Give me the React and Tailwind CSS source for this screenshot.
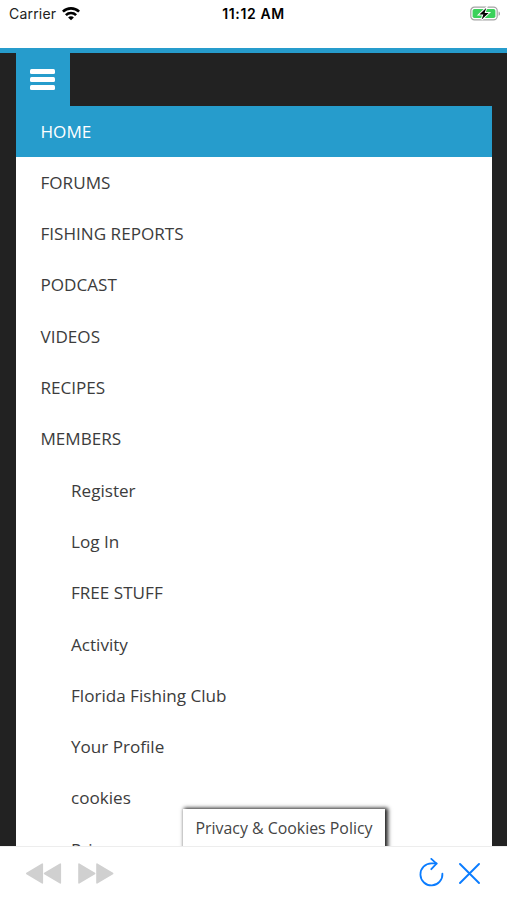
import React from "react";

const menuItems = [
  { label: "HOME", active: true },
  { label: "FORUMS" },
  { label: "FISHING REPORTS" },
  { label: "PODCAST" },
  { label: "VIDEOS" },
  { label: "RECIPES" },
  {
    label: "MEMBERS",
    children: [
      "Register",
      "Log In",
      "FREE STUFF",
      "Activity",
      "Florida Fishing Club",
      "Your Profile",
      "cookies",
      "Privacy",
    ],
  },
];

const WifiIcon = () => (
  <svg className="ml-[6px] h-[14px] w-[18px]" viewBox="0 0 18 14">
    <g fill="none" stroke="#000" strokeWidth="2.6">
      <path d="M0.9 4.7C5.4 0.2 12.6 0.2 17.1 4.7" />
      <path d="M3.9 8.1C6.7 5.3 11.3 5.3 14.1 8.1" />
    </g>
    <path d="M9 13.3L6.1 10.4C7.7 8.9 10.3 8.9 11.9 10.4Z" />
  </svg>
);

const BatteryIcon = () => (
  <svg className="h-[16px] w-[31px]" viewBox="0 0 31 16">
    <rect
      x="0.8"
      y="1.2"
      width="26.4"
      height="12.6"
      rx="3.6"
      fill="#fff"
      stroke="#a4a4a4"
      strokeWidth="1.2"
    />
    <rect x="2.6" y="3" width="22.8" height="9" rx="1.8" fill="#3bd15b" />
    <path d="M28.6 5.4c1.8.6 1.8 3.8 0 4.4z" fill="#a4a4a4" />
    <path
      d="M16.2 2L9.4 8.4h4l-1.8 5.2 7-6.6h-4z"
      fill="#000"
      stroke="#fff"
      strokeWidth="2"
      paintOrder="stroke"
    />
  </svg>
);

const StatusBar = () => (
  <header className="grid h-12 shrink-0 grid-cols-3 items-start bg-white font-['Inter',sans-serif] text-black">
    <div className="flex h-[27px] items-center pl-[9px] text-[14px] tracking-[0.2px] text-[#222]">
      Carrier
      <WifiIcon />
    </div>
    <div className="flex h-[27px] items-center justify-center text-[14px] font-semibold tracking-[0.6px]">
      11:12 AM
    </div>
    <div className="flex h-[27px] items-center justify-end pr-[6px]">
      <BatteryIcon />
    </div>
  </header>
);

const MenuLink = ({ label, active, nested }) => (
  <a
    className={`flex h-[51.3px] items-center pb-[0.6px] ${nested ? "pl-[55px]" : "pl-[24.5px]"} ${
      active ? "bg-[#269ccc] text-white" : "text-[#3c3c3c]"
    }`}
  >
    {label}
  </a>
);

const Toolbar = () => (
  <footer className="flex h-[54px] shrink-0 items-start justify-between border-t border-[#ededed] bg-white pt-[11px] pr-[27px] pl-[25px]">
    <div className="flex gap-[15px] text-[#d0d0d0]">
      <svg
        className="h-8 w-[37px]"
        viewBox="0 0 37 32"
        fill="currentColor"
        stroke="currentColor"
        strokeWidth="1.6"
        strokeLinejoin="round"
      >
        <path d="M1.8 15.5L17.3 6.1V24.9Z" />
        <path d="M19.6 15.5L35.3 6.1V24.9Z" />
      </svg>
      <svg
        className="h-8 w-[37px]"
        viewBox="0 0 37 32"
        fill="currentColor"
        stroke="currentColor"
        strokeWidth="1.6"
        strokeLinejoin="round"
      >
        <path d="M2 6.1L17.6 15.5L2 24.9Z" />
        <path d="M20 6.1L35.6 15.5L20 24.9Z" />
      </svg>
    </div>
    <div className="flex gap-[15px] text-[#0a7cff]">
      <svg
        className="h-8 w-[25px]"
        viewBox="0 0 25 32"
        fill="none"
        stroke="currentColor"
        strokeWidth="1.8"
        strokeLinecap="round"
        strokeLinejoin="round"
      >
        <path d="M23.4 15.6A11 11 0 1 1 12.4 5.4H17.6" />
        <path d="M12.3 0.9L17.5 5.7L12.3 11.2" />
      </svg>
      <svg
        className="h-8 w-[21px]"
        viewBox="0 0 21 32"
        fill="none"
        stroke="currentColor"
        strokeWidth="1.9"
        strokeLinecap="round"
      >
        <path d="M1 6L20 25M20 6L1 25" />
      </svg>
    </div>
  </footer>
);

const App = () => {
  return (
    <div className="flex h-[900px] w-[507px] flex-col overflow-hidden bg-white">
      <StatusBar />

      <main className="relative min-h-0 flex-1 overflow-hidden border-t-[5px] border-[#269ccc] bg-[#222] pr-[15px] pl-4 font-['Open_Sans',sans-serif] text-[17.1px]">
        <button
          type="button"
          className="flex h-[53px] w-[53.5px] flex-col items-center justify-center gap-[3px] bg-[#269ccc]"
        >
          <span className="h-[5px] w-[25px] rounded-[1.5px] bg-white" />
          <span className="h-[5px] w-[25px] rounded-[1.5px] bg-white" />
          <span className="h-[5px] w-[25px] rounded-[1.5px] bg-white" />
        </button>

        <nav className="bg-white">
          {menuItems.map((item) => (
            <div key={item.label}>
              <MenuLink label={item.label} active={item.active} />
              {item.children?.map((child) => (
                <MenuLink key={child} label={child} nested />
              ))}
            </div>
          ))}
        </nav>

        <div className="absolute -bottom-2 left-[183px] flex h-[45px] w-[202px] items-start justify-center bg-white pt-[7px] text-[15.9px] leading-6 text-[#444] shadow-[2px_0_4px_1px_#222]">
          Privacy &amp; Cookies Policy
        </div>
      </main>

      <Toolbar />
    </div>
  );
};

export default App;
